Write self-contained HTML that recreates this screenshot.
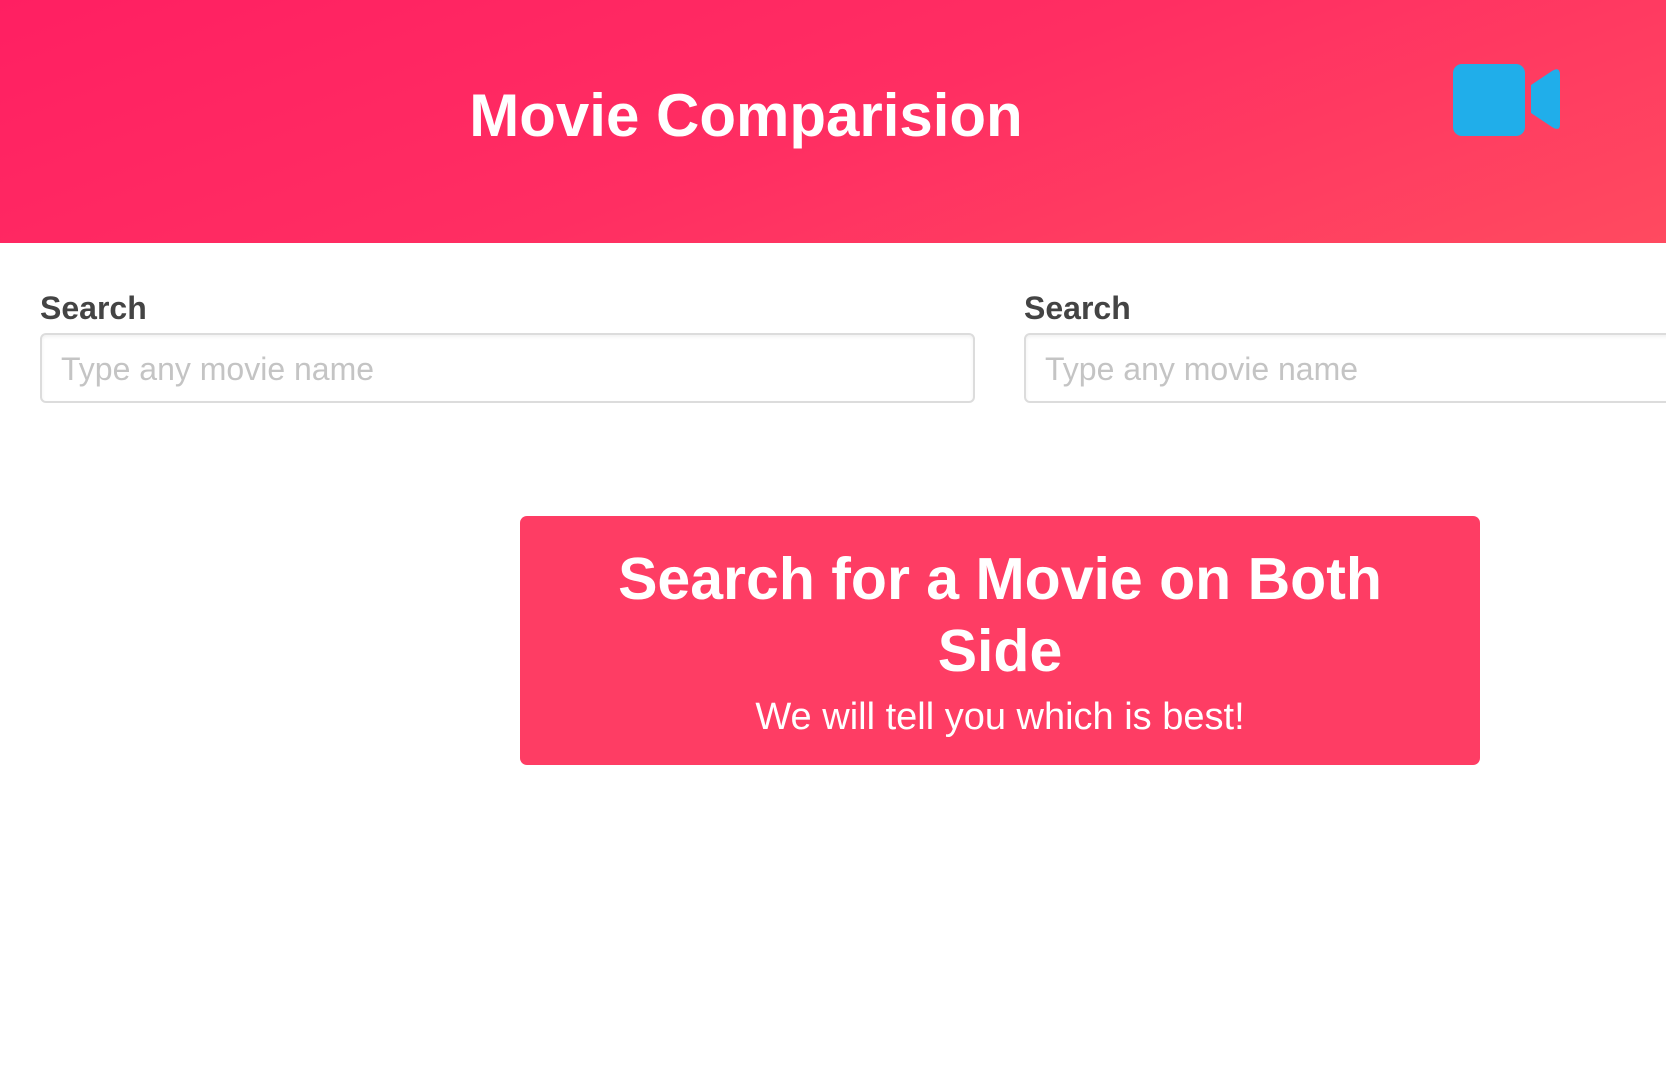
<!DOCTYPE html>
<html><head><meta charset="utf-8"><style>
*{margin:0;padding:0;box-sizing:border-box}
html,body{width:1666px;height:1066px;overflow:hidden;background:#fff;font-family:"Liberation Sans",sans-serif}
.hdr{position:absolute;left:0;top:0;width:1666px;height:243px;background:linear-gradient(160deg,#ff1f62 0%,#ff2e62 50%,#ff4a60 100%)}
.title{position:absolute;left:346px;width:800px;text-align:center;top:81px;font-size:60px;line-height:70px;font-weight:bold;color:#fff}
.lbl{position:absolute;top:291px;font-size:32px;font-weight:bold;color:#444;line-height:34px}
.inp{position:absolute;top:333px;height:70px;border:2px solid #dcdcdc;border-radius:6px;background:#fff;font-size:32px;color:#c4c4c4;padding-left:19px;line-height:68px;box-shadow:inset 0 2px 3px rgba(0,0,0,.06)}
.box{position:absolute;left:520px;top:516px;width:960px;height:249px;background:#fe3d64;border-radius:7px;color:#fff;text-align:center}
.h{font-size:59px;font-weight:bold;line-height:72px;padding-top:27px}
.s{font-size:38px;line-height:44px;margin-top:8px}
</style></head><body>
<div class="hdr">
<div class="title">Movie Comparision</div>
<svg style="position:absolute;left:1453px;top:64px" width="110" height="72" viewBox="0 0 110 72">
<rect x="0" y="0" width="72" height="72" rx="9" fill="#20aeea"/>
<path d="M78 21 L99 7 Q107 2 107 11 L107 60 Q107 68 99 63 L78 49 Z" fill="#20aeea"/>
</svg>
</div>
<div class="lbl" style="left:40px">Search</div>
<div class="inp" style="left:40px;width:935px">Type any movie name</div>
<div class="lbl" style="left:1024px">Search</div>
<div class="inp" style="left:1024px;width:900px">Type any movie name</div>
<div class="box"><div class="h">Search for a Movie on Both<br>Side</div><div class="s">We will tell you which is best!</div></div>
</body></html>
